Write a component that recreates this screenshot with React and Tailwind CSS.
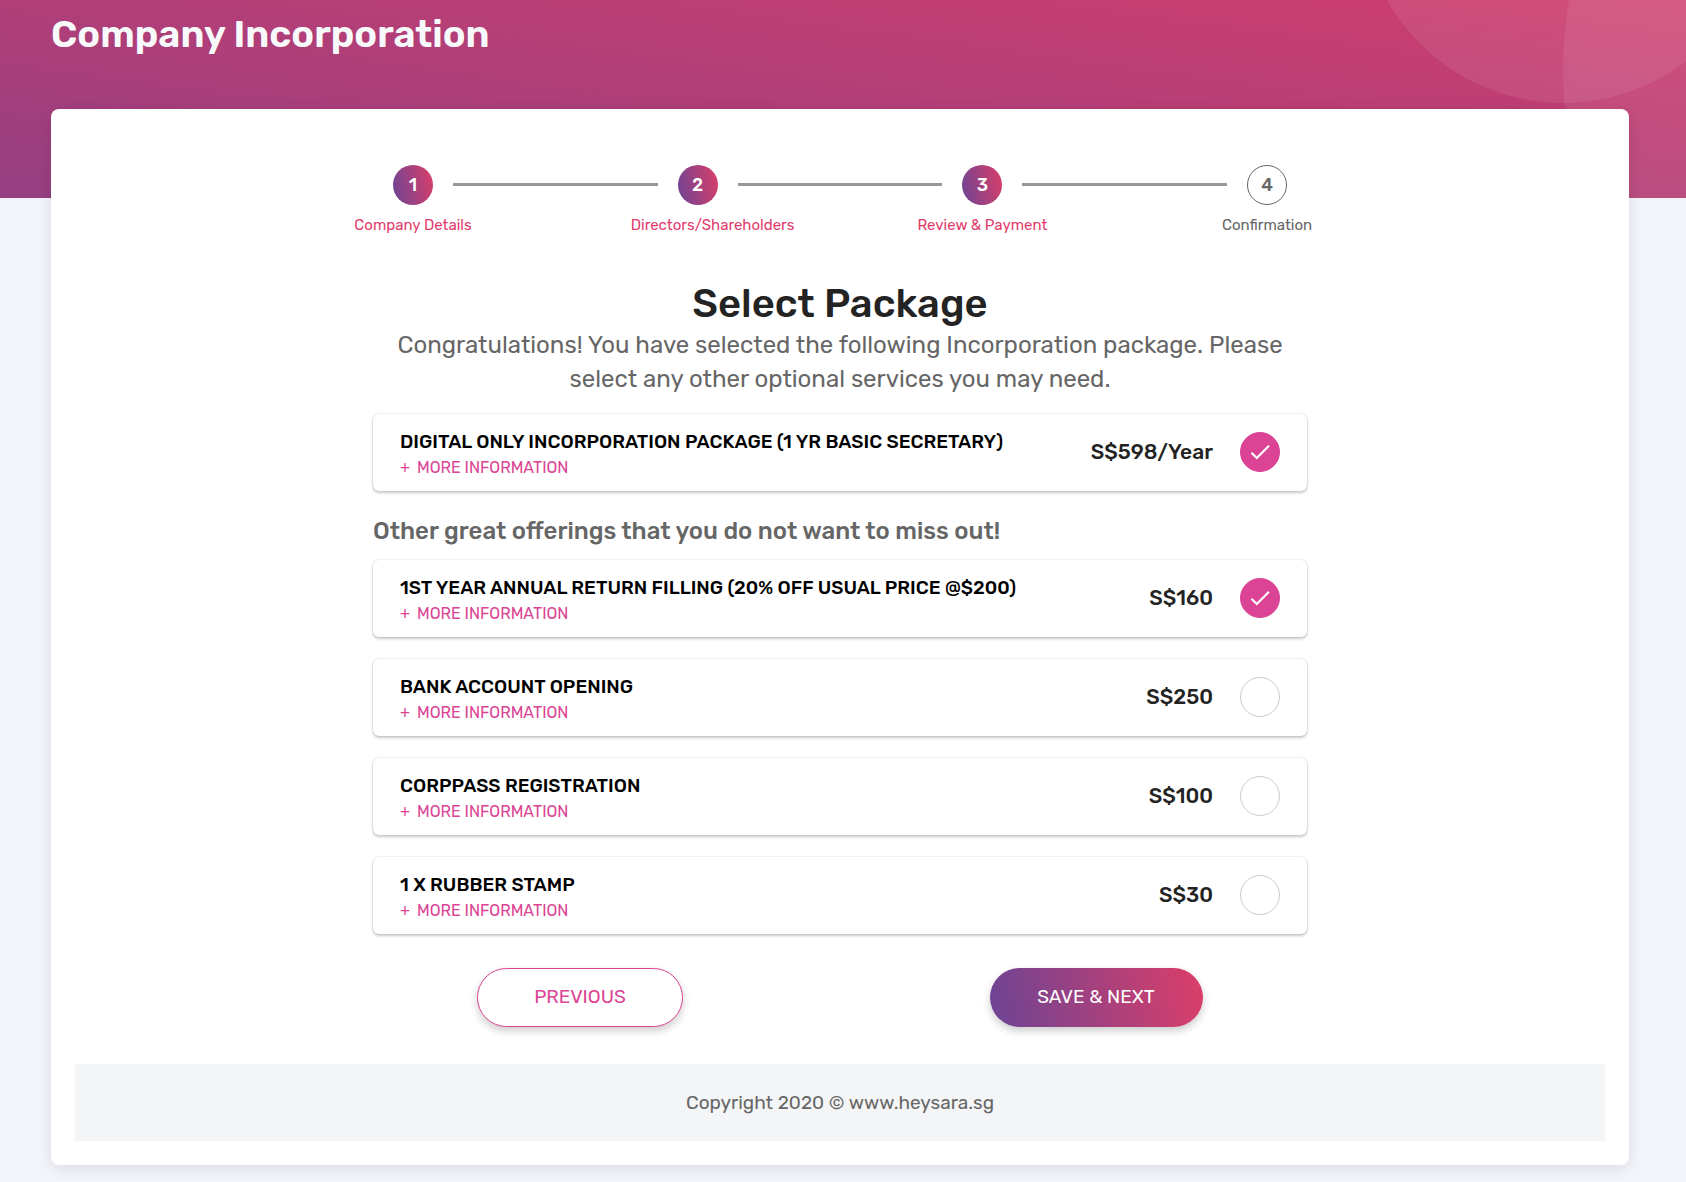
import { useState } from 'react';
import { MdCheck } from 'react-icons/md';

const steps = [
  { label: 'Company Details', done: true },
  { label: 'Directors/Shareholders', done: true },
  { label: 'Review & Payment', done: true },
  { label: 'Confirmation', done: false },
];

const basePackage = {
  id: 'digital',
  name: 'DIGITAL ONLY INCORPORATION PACKAGE (1 YR BASIC SECRETARY)',
  price: 'S$598/Year',
};

const addons = [
  { id: 'annual-return', name: '1ST YEAR ANNUAL RETURN FILLING (20% OFF USUAL PRICE @$200)', price: 'S$160' },
  { id: 'bank', name: 'BANK ACCOUNT OPENING', price: 'S$250' },
  { id: 'corppass', name: 'CORPPASS REGISTRATION', price: 'S$100' },
  { id: 'stamp', name: '1 X RUBBER STAMP', price: 'S$30' },
];

function Stepper() {
  return (
    <ol className="flex items-start">
      {steps.map((step, i) => (
        <li key={step.label} className={i > 0 ? 'flex flex-1 items-start' : 'flex items-start'}>
          {i > 0 && <span className="mt-[18px] h-[3px] flex-1 bg-[#999999]" />}
          <div className="flex w-20 flex-col items-center">
            <span
              className={
                step.done
                  ? 'flex h-10 w-10 items-center justify-center rounded-full bg-[linear-gradient(78deg,#6c4494,#dc3e69)] text-lg font-medium text-white'
                  : 'flex h-10 w-10 items-center justify-center rounded-full border border-[#666666] text-lg font-medium text-[#666666]'
              }
            >
              {i + 1}
            </span>
            <span
              className={
                step.done
                  ? 'mt-[10px] w-[134px] text-center text-[15px] leading-5 whitespace-nowrap text-[#e23c6c]'
                  : 'mt-[10px] w-[134px] text-center text-[15px] leading-5 whitespace-nowrap text-[#666666]'
              }
            >
              {step.label}
            </span>
          </div>
        </li>
      ))}
    </ol>
  );
}

function PackageCard({ item, checked, onToggle }) {
  return (
    <div className="flex items-center rounded-md bg-white px-[27px] shadow-[0_0_2px_rgba(0,0,0,0.2),0_2px_3px_rgba(0,0,0,0.2)]">
      <div className="flex-1 pt-[14px] pb-[11px]">
        <label htmlFor={item.id} className="block text-[19px] leading-7 font-medium text-black">
          {item.name}
        </label>
        <button type="button" className="block text-base leading-6 text-[#db4494]">
          <span className="mr-[7px]">+</span>MORE INFORMATION
        </button>
      </div>
      <div className="flex items-center gap-[27px] pb-px">
        <span className="text-[21px] font-medium text-[#232323]">{item.price}</span>
        <div className="grid h-10 w-10 place-items-center">
          <input
            id={item.id}
            type="checkbox"
            checked={checked}
            onChange={onToggle}
            className="col-start-1 row-start-1 h-10 w-10 cursor-pointer appearance-none rounded-full border border-[#cccccc] checked:border-[#db4494] checked:bg-[#db4494]"
          />
          {checked && (
            <MdCheck className="pointer-events-none col-start-1 row-start-1 h-[26px] w-[26px] text-white" />
          )}
        </div>
      </div>
    </div>
  );
}

export default function App() {
  const [selected, setSelected] = useState(['digital', 'annual-return']);

  const toggle = (id) => {
    setSelected(selected.includes(id) ? selected.filter((s) => s !== id) : [...selected, id]);
  };

  return (
    <div className="relative min-h-screen bg-[#f4f5fa] pb-4 font-['Rubik',Roboto,sans-serif]">
      {/* Banner behind the top of the card */}
      <div className="absolute inset-x-0 top-0 h-[198px] overflow-hidden bg-[linear-gradient(8deg,#963f82,#cf3e6d)]">
        <div className="absolute -top-[301px] -right-[79px] h-[404px] w-[404px] rounded-full bg-white/8" />
        <div className="absolute -top-[330px] -right-[677px] h-[800px] w-[800px] rounded-full bg-white/8" />
      </div>

      <div className="relative pr-[57px] pl-[51px]">
        <h1 className="h-[109px] pt-[10px] text-[38px] leading-[48px] font-semibold text-[#f8f9fb]">
          Company Incorporation
        </h1>

        <main className="rounded-lg bg-white px-6 pt-14 pb-6 shadow-[0_4px_16px_rgba(0,0,0,0.1)]">
          <div className="mx-auto max-w-[1032px]">
            <div className="px-[49px]">
              <Stepper />

              <h2 className="mt-[45px] text-center text-[40px] leading-[48px] font-medium text-[#232323]">
                Select Package
              </h2>
              <p className="text-center text-2xl leading-[34px] text-[#666666]">
                Congratulations! You have selected the following Incorporation package. Please
                select any other optional services you may need.
              </p>

              <div className="mt-[18px]">
                <PackageCard
                  item={basePackage}
                  checked={selected.includes(basePackage.id)}
                  onToggle={() => toggle(basePackage.id)}
                />
              </div>

              <h3 className="mt-6 mb-[13px] text-2xl leading-8 font-medium text-[#666666]">
                Other great offerings that you do not want to miss out!
              </h3>

              <div className="flex flex-col gap-[22px]">
                {addons.map((item) => (
                  <PackageCard
                    key={item.id}
                    item={item}
                    checked={selected.includes(item.id)}
                    onToggle={() => toggle(item.id)}
                  />
                ))}
              </div>
            </div>

            <div className="mt-[34px] grid grid-cols-2 justify-items-center">
              <button
                type="button"
                className="mr-1 h-[59px] w-[206px] rounded-full border border-[#db4494] bg-white text-[19px] text-[#db4494] shadow-[0_4px_8px_rgba(0,0,0,0.2)]"
              >
                PREVIOUS
              </button>
              <button
                type="button"
                className="mr-1 h-[59px] w-[213px] rounded-full bg-[linear-gradient(78deg,#6c4494,#dc3e69)] text-[19px] text-white shadow-[0_4px_8px_rgba(0,0,0,0.2)]"
              >
                SAVE &amp; NEXT
              </button>
            </div>
          </div>

          <footer className="mt-[37px] bg-[#f4f5f7] py-6 text-center text-[19px] leading-[29px] text-[#666666]">
            Copyright 2020 © www.heysara.sg
          </footer>
        </main>
      </div>
    </div>
  );
}
